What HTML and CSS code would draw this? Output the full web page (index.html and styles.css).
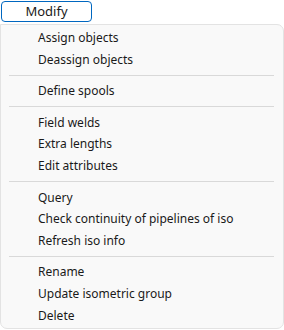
FILE: index.html
```html
<!DOCTYPE html>
<html lang="en">
<head>
  <meta charset="UTF-8" />
  <title>Modify menu</title>
  <link rel="stylesheet" href="styles.css">
</head>
<body>

  <button class="menu-btn">Modify</button>

  <div class="menu">
    <div class="item">Assign objects</div>
    <div class="item">Deassign objects</div>
    <div class="sep"></div>
    <div class="item">Define spools</div>
    <div class="sep"></div>
    <div class="item">Field welds</div>
    <div class="item">Extra lengths</div>
    <div class="item">Edit attributes</div>
    <div class="sep"></div>
    <div class="item">Query</div>
    <div class="item">Check continuity of pipelines of iso</div>
    <div class="item">Refresh iso info</div>
    <div class="sep"></div>
    <div class="item">Rename</div>
    <div class="item">Update isometric group</div>
    <div class="item">Delete</div>
  </div>

</body>
</html>
```

FILE: styles.css
```css
* {
  box-sizing: border-box;
  margin: 0;
  padding: 0;
}

body {
  font-family: 'Noto Sans', 'Open Sans', sans-serif;
  font-size: 12px;
  color: #1a1a1a;
  background: #ffffff;
  width: 284px;
  height: 330px;
  overflow: hidden;
}

.menu-btn {
  display: block;
  margin: 1px 0 0 1px;
  width: 91px;
  height: 21px;
  font-family: inherit;
  font-size: 13px;
  color: #1a1a1a;
  background: #ffffff;
  border: 1px solid #0067c0;
  border-radius: 4px;
  line-height: 17px;
}

.menu {
  margin-top: 2px;
  width: 284px;
  height: 305px;
  background: #f9f9f9;
  border: 1px solid #e3e3e3;
  border-radius: 0 7px 7px 7px;
  padding: 2px 0;
}

.item {
  height: 21.6px;
  line-height: 21.6px;
  padding-left: 37px;
  white-space: nowrap;
}

.sep {
  height: 1px;
  background: #d9d9d9;
  margin: 4.5px 9px 4.5px 8px;
}
```
